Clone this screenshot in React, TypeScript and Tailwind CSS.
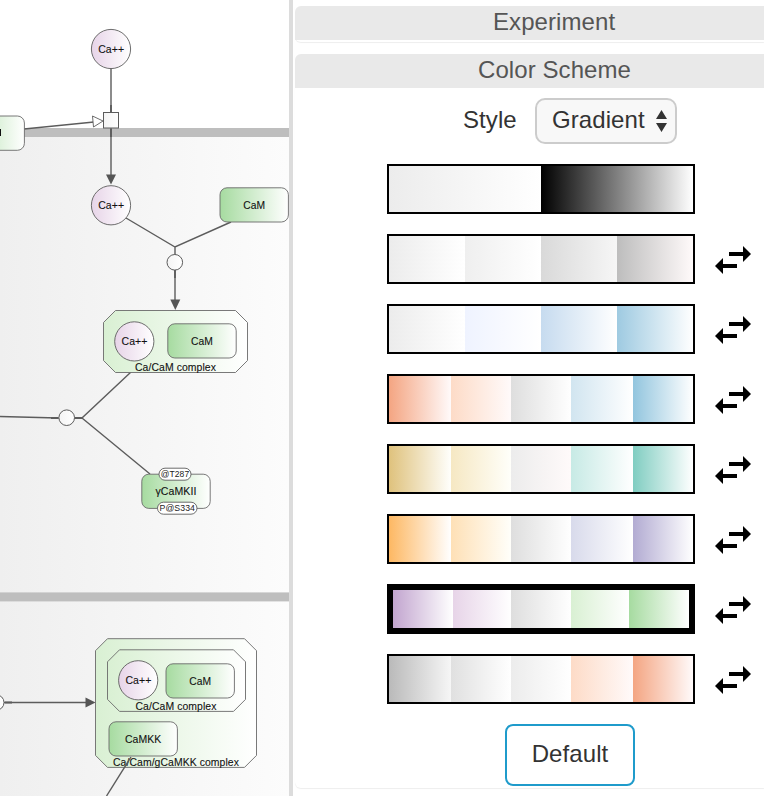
import React from "react";

const INK = "#5c5c5c";

const SCHEMES: { stops: [string, string][]; selected?: boolean; swap?: boolean }[] = [
  { stops: [["#ececec", "#ffffff"], ["#000000", "#ffffff"]] },
  { stops: [["#ececec", "#ffffff"], ["#efefef", "#ffffff"], ["#d9d9d9", "#f6f6f6"], ["#bdbdbd", "#fffafa"]], swap: true },
  { stops: [["#ececec", "#ffffff"], ["#eff3ff", "#ffffff"], ["#c6dbef", "#ffffff"], ["#9ecae1", "#ffffff"]], swap: true },
  { stops: [["#f4a582", "#fffafa"], ["#fddbc7", "#fffafa"], ["#dedede", "#ffffff"], ["#d1e5f0", "#ffffff"], ["#92c5de", "#ffffff"]], swap: true },
  { stops: [["#dfc27d", "#fffffc"], ["#f6e8c3", "#fffffa"], ["#ececec", "#fffafa"], ["#c7eae5", "#ffffff"], ["#80cdc1", "#ffffff"]], swap: true },
  { stops: [["#fdb863", "#ffffff"], ["#fee0b6", "#fffffa"], ["#dedede", "#ffffff"], ["#d8daeb", "#ffffff"], ["#b2abd2", "#ffffff"]], swap: true },
  { stops: [["#c2a5cf", "#ffffff"], ["#e7d4e8", "#ffffff"], ["#dedede", "#ffffff"], ["#d9f0d3", "#ffffff"], ["#a6dba0", "#ffffff"]], selected: true, swap: true },
  { stops: [["#bababa", "#f6f6f6"], ["#e0e0e0", "#ffffff"], ["#ececec", "#ffffff"], ["#fddbc7", "#fffafa"], ["#f4a582", "#fffafa"]], swap: true },
];

function columnsFor(count: number, selected?: boolean) {
  if (count === 2) return "grid-cols-2";
  if (count === 4) return "grid-cols-4";
  return selected
    ? "grid-cols-[60px_58px_60px_58px_60px]"
    : "grid-cols-[62px_60px_60px_62px_60px]";
}

function SwapIcon() {
  return (
    <svg className="ml-5 mt-0.5 h-7 w-9" viewBox="0 0 36 28" fill="#000">
      <path d="M14 6H28V0L36 8L28 16V10H14Z" />
      <path d="M22 18H8V12L0 20L8 28V22H22Z" />
    </svg>
  );
}

function SchemeRow({ stops, selected, swap }: (typeof SCHEMES)[number]) {
  return (
    <div className="flex h-[50px] items-center">
      <div
        className={`grid h-[50px] w-[308px] border-black ${selected ? "border-[6px]" : "border-2"} ${columnsFor(stops.length, selected)}`}
      >
        {stops.map(([from, to], i) => (
          <div key={i} style={{ backgroundImage: `linear-gradient(to right, ${from}, ${to})` }} />
        ))}
      </div>
      {swap && <SwapIcon />}
    </div>
  );
}

function Label({ x, y, w, size = 10.8, children }: { x: number; y: number; w: number; size?: number; children: string }) {
  return (
    <text x={x - w / 2} y={y} fontSize={size} textLength={w} lengthAdjust="spacingAndGlyphs" fill="#111" stroke="#111" strokeWidth={0.1}>
      {children}
    </text>
  );
}

function Ion({ x, y }: { x: number; y: number }) {
  return (
    <g>
      <circle cx={x} cy={y} r={19.6} fill="url(#ion)" stroke={INK} strokeWidth={0.9} />
      <Label x={x + 0.2} y={y + 3.6} w={26}>Ca++</Label>
    </g>
  );
}

function Protein({ x, y, name, w }: { x: number; y: number; name: string; w: number }) {
  return (
    <g>
      <rect x={x} y={y} width={68.4} height={34.2} rx={7} fill="url(#protein)" stroke="#6a6a6a" strokeWidth={0.9} />
      <Label x={x + 34.2} y={y + 21} w={w}>{name}</Label>
    </g>
  );
}

function Complex({ x, y, w, h, fill = "url(#complex)" }: { x: number; y: number; w: number; h: number; fill?: string }) {
  const c = 12;
  return (
    <path
      d={`M${x + c} ${y}H${x + w - c}L${x + w} ${y + c}V${y + h - c}L${x + w - c} ${y + h}H${x + c}L${x} ${y + h - c}V${y + c}Z`}
      fill={fill}
      stroke="#6a6a6a"
      strokeWidth={0.9}
    />
  );
}

function StateTag({ x, y, w, tw, text }: { x: number; y: number; w: number; tw: number; text: string }) {
  return (
    <g>
      <rect x={x} y={y} width={w} height={12} rx={6} fill="#fff" stroke={INK} strokeWidth={0.9} />
      <text x={x + w / 2 - tw / 2} y={y + 9.2} fontSize={9} textLength={tw} lengthAdjust="spacingAndGlyphs" fill="#222">{text}</text>
    </g>
  );
}

function Pathway() {
  return (
    <svg
      className="block h-[796px] w-[289px] shrink-0 font-['Liberation_Sans',Arial,sans-serif]"
      viewBox="0 0 289 796"
      fill="none"
    >
      <defs>
        <linearGradient id="compartment"><stop stopColor="#efefef" /><stop offset="1" stopColor="#fcfcfc" /></linearGradient>
        <linearGradient id="protein"><stop stopColor="#a6dba0" /><stop offset="1" stopColor="#fff" /></linearGradient>
        <linearGradient id="complex"><stop stopColor="#d9f0d3" /><stop offset="1" stopColor="#fff" /></linearGradient>
        <linearGradient id="ion"><stop stopColor="#e7d4e8" /><stop offset="1" stopColor="#fff" /></linearGradient>
        <linearGradient id="process"><stop stopColor="#f4f4f4" /><stop offset="1" stopColor="#fff" /></linearGradient>
        <linearGradient id="enzyme" gradientUnits="userSpaceOnUse" x1="-44" x2="24.5" y1="0" y2="0"><stop stopColor="#a6dba0" /><stop offset="1" stopColor="#fff" /></linearGradient>
      </defs>
      <rect y="132" width="289" height="464" fill="url(#compartment)" />
      <rect y="597" width="289" height="199" fill="url(#compartment)" />
      <rect y="128" width="289" height="9" fill="#bebebe" />
      <rect y="592.4" width="289" height="9" fill="#bebebe" />

      <g stroke={INK} strokeWidth="1.4">
        <path d="M111 68V176M24 129L94 122M126 218L175 247L231 222M175 247V302" />
        <path d="M131 372L82 418L150 474M0 416.5L58 418H82M0 702.5H86" />
      </g>
      <path d="M111 105V121M111 129V137M175 270V278M51 418H58M75 418H82M5 702.5H12" stroke={INK} strokeWidth="1.8" />
      <g fill="#555">
        <path d="M106 174.5H116L111 184.5Z" />
        <path d="M170.3 299.5H180.3L175.3 310Z" />
        <path d="M85.5 697.5V707.5L95.5 702.5Z" />
      </g>
      <path d="M92.5 116L103 121L93.5 127Z" fill="#fff" stroke={INK} strokeWidth="0.9" />
      <rect x="103.5" y="112.5" width="15" height="15.5" fill="url(#process)" stroke={INK} />
      <g fill="url(#process)" stroke={INK} strokeWidth="1">
        <circle cx="174.8" cy="262.3" r="7.8" />
        <circle cx="66.7" cy="417.7" r="7.8" />
        <circle cx="-3.8" cy="702.5" r="7.8" />
      </g>

      <rect x="-44" y="116" width="68.4" height="34.3" rx="7" fill="url(#enzyme)" stroke="#6a6a6a" strokeWidth="0.9" />
      <rect x="0" y="129" width="1" height="7" fill="#111" />

      <Ion x={111} y={49} />
      <Ion x={111} y={205.3} />
      <Protein x={220} y={187.8} name="CaM" w={22} />

      <Complex x={103.5} y={310.5} w={144} h={62} />
      <Ion x={134.3} y={341.4} />
      <Protein x={167.8} y={323.8} name="CaM" w={22} />
      <Label x={175.5} y={371} w={81}>Ca/CaM complex</Label>

      <Protein x={141.8} y={474.2} name="γCaMKII" w={41} />
      <StateTag x={159} y={468.2} w={32} tw={28.5} text="@T287" />
      <StateTag x={157.5} y={502.2} w={39.5} tw={35.5} text="P@S334" />

      <Complex x={95.5} y={638.7} w={161} h={128.7} />
      <Complex x={107.5} y={649.8} w={138} h={61.6} />
      <Ion x={138.2} y={680.3} />
      <Protein x={166} y={663.8} name="CaM" w={22} />
      <Label x={176} y={709.7} w={81}>Ca/CaM complex</Label>
      <Protein x={109} y={721.8} name="CaMKK" w={36.5} />
      <Label x={176} y={766} w={126}>Ca/Cam/gCaMKK complex</Label>
      <path d="M131 757L106.5 796" stroke={INK} strokeWidth="1.4" />
    </svg>
  );
}

export default function App() {
  return (
    <div className="flex h-[796px] w-[764px] overflow-hidden bg-white font-['Liberation_Sans',Arial,sans-serif] text-2xl tracking-[0.08px] text-[#333]">
      <Pathway />
      <div className="w-1 shrink-0 bg-[#dcdcdc]" />
      <aside className="min-w-0 flex-1 pl-0.5 pt-1.5">
        <section className="h-[36px] rounded-bl-md shadow-[0_1px_1px_#eeeeee]">
          <h2 className="h-[34px] rounded-tl-md bg-[#e9e9e9] pl-[198px] leading-[31px] text-[#555]">Experiment</h2>
        </section>
        <section className="mt-3 h-[734px] rounded-bl-md shadow-[0_1px_1px_#eeeeee]">
          <h2 className="h-[34px] rounded-tl-md bg-[#e9e9e9] pl-[183px] leading-[31px] text-[#555]">Color Scheme</h2>
          <div className="flex h-[66px] items-start pl-[168px] pt-2.5">
            <label className="w-[72px] leading-[44px]">Style</label>
            <button className="flex h-[46px] w-[142px] items-center rounded-[10px] border-2 border-[#ccc] bg-[#f8f8f8] pl-[15px]">
              <span className="w-[104px] whitespace-nowrap pb-0.5 text-left leading-[40px]">Gradient</span>
              <svg className="h-[22px] w-[11px] shrink-0" viewBox="0 0 11 22" fill="#333">
                <path d="M5.5 0L11 9H0ZM0 13H11L5.5 22Z" />
              </svg>
            </button>
          </div>
          <div className="mt-2.5 flex flex-col gap-5 pl-[92px]">
            {SCHEMES.map((scheme, i) => (
              <SchemeRow key={i} {...scheme} />
            ))}
            <button className="ml-[118px] h-[62px] w-[130px] rounded-lg border-2 border-[#1f9bcb] bg-white pb-0.5 leading-[56px]">Default</button>
          </div>
        </section>
      </aside>
    </div>
  );
}
